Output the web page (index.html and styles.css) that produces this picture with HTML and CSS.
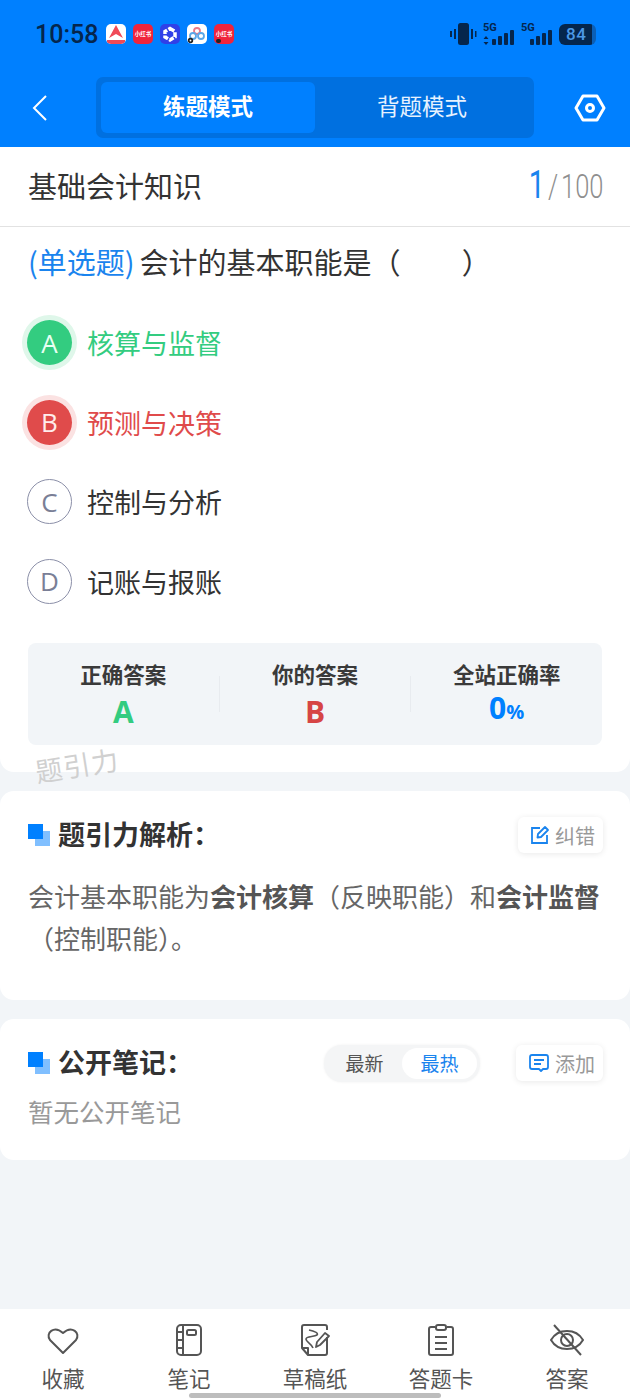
FILE: index.html
```html
<!DOCTYPE html>
<html lang="zh-CN">
<head>
    <meta charset="UTF-8">
    <meta name="viewport" content="width=device-width, initial-scale=1.0">
    <title>题引力</title>
    <link rel="stylesheet" href="styles.css">
</head>
<body>
    <header class="top">
        <div class="status">
            <span class="clock">10:58</span>
            <div class="apps">
                <span class="app app-white">
                    <svg viewBox="0 0 20 20" width="20" height="20"><path d="M10 1 17 14 10 10 3 14Z" fill="#f04a58"/><rect x="1" y="16" width="18" height="4" fill="#f04a58"/></svg>
                </span>
                <span class="app app-red">小红书</span>
                <span class="app app-indigo">
                    <svg viewBox="0 0 20 20" width="20" height="20" fill="none"><path d="M10 4.500 15 7.500V13L10 16 5 13V7.500Z" stroke="#fff" stroke-width="3.500" stroke-dasharray="5 1.500"/></svg>
                </span>
                <span class="app app-white">
                    <svg viewBox="0 0 20 20" width="20" height="20" fill="none" stroke-width="1.800"><circle cx="10" cy="7" r="3" stroke="#e8788a"/><circle cx="6" cy="12" r="3" stroke="#5aa7e8"/><circle cx="14" cy="12" r="3" stroke="#5aa7e8"/><circle cx="3.500" cy="16.500" r="1.800" stroke="#222"/></svg>
                </span>
                <span class="app app-red">小红书<i class="app-dot"></i></span>
            </div>
            <div class="sys">
                <svg viewBox="0 0 27 22" width="27" height="22" fill="#05264d"><rect x="0" y="8" width="2" height="6"/><rect x="4" y="6" width="2" height="10"/><rect x="8" y="0" width="11" height="22" rx="2.500"/><rect x="21" y="6" width="2" height="10"/><rect x="25" y="8" width="1.500" height="6"/></svg>
                <div class="signal">
                    <span class="net">5G</span>
                    <svg class="bars" viewBox="0 0 32 22" width="32" height="22" fill="#05264d"><path d="M3 13 5.500 16H.5ZM3 22 .5 19H5.500Z"/><rect x="9" y="16" width="4" height="6" rx="1"/><rect x="15" y="13" width="4" height="9" rx="1"/><rect x="21" y="10" width="4" height="12" rx="1"/><rect x="27" y="7" width="4" height="15" rx="1"/></svg>
                </div>
                <div class="signal">
                    <span class="net">5G</span>
                    <svg class="bars" viewBox="0 0 32 22" width="32" height="22" fill="#05264d"><rect x="9" y="16" width="4" height="6" rx="1"/><rect x="15" y="13" width="4" height="9" rx="1"/><rect x="21" y="10" width="4" height="12" rx="1"/><rect x="27" y="7" width="4" height="15" rx="1"/></svg>
                </div>
                <div class="battery"><span class="battery-num">84</span></div>
            </div>
        </div>
        <nav class="nav">
            <svg class="back" viewBox="0 0 18 28" width="18" height="28" fill="none" stroke="#fff" stroke-width="2"><path d="M15 2 3 14 15 26"/></svg>
            <div class="tabs">
                <span class="tab tab-on">练题模式</span>
                <span class="tab">背题模式</span>
            </div>
            <svg class="gear" viewBox="0 0 32 28" width="32" height="28" fill="none" stroke="#fff" stroke-width="3"><path d="M9 2H23L30 14 23 26H9L2 14Z" stroke-linejoin="round"/><circle cx="16" cy="14" r="3.500"/></svg>
        </nav>
    </header>

    <main class="page">
        <section class="card card-question">
            <div class="subject">
                <span class="subject-name">基础会计知识</span>
                <span class="count"><b>1</b><i>/</i>100</span>
            </div>
            <div class="question"><span class="q-type">(单选题)</span>会计的基本职能是（<span class="q-blank"></span>）</div>
            <ul class="options">
                <li class="option right"><span class="letter">A</span>核算与监督</li>
                <li class="option wrong"><span class="letter">B</span>预测与决策</li>
                <li class="option"><span class="letter">C</span>控制与分析</li>
                <li class="option"><span class="letter">D</span>记账与报账</li>
            </ul>
            <div class="stats">
                <div class="stat"><span class="stat-label">正确答案</span><span class="stat-value green">A</span></div>
                <span class="stat-sep"></span>
                <div class="stat"><span class="stat-label">你的答案</span><span class="stat-value red">B</span></div>
                <span class="stat-sep"></span>
                <div class="stat"><span class="stat-label">全站正确率</span><span class="stat-value blue">0<small>%</small></span></div>
            </div>
            <span class="watermark">题引力</span>
        </section>

        <section class="card card-analysis">
            <div class="card-head">
                <span class="mark"></span>
                <h2 class="card-title">题引力解析：</h2>
                <span class="pill">
                    <svg viewBox="0 0 20 20" width="20" height="20" fill="none" stroke="#1a84ee" stroke-width="1.800"><path d="M10 3H2V18H17V10"/><path d="M8 9 15 2 18 5 11 12 7.500 12.500Z" stroke-linejoin="round"/></svg>
                    纠错
                </span>
            </div>
            <p class="analysis">会计基本职能为<b>会计核算</b>（反映职能）和<b>会计监督</b>（控制职能）。</p>
        </section>

        <section class="card card-notes">
            <div class="card-head">
                <span class="mark"></span>
                <h2 class="card-title">公开笔记：</h2>
                <div class="sort"><span class="sort-item">最新</span><span class="sort-item sort-on">最热</span></div>
                <span class="pill pill-add">
                    <svg viewBox="0 0 22 20" width="22" height="20" fill="none" stroke="#1a84ee" stroke-width="1.800"><path d="M4 2H18Q20 2 20 4V14Q20 16 18 16H15L13 18 11 16H4Q2 16 2 14V4Q2 2 4 2Z" stroke-linejoin="round"/><path d="M6 7H16M6 11H13"/></svg>
                    添加
                </span>
            </div>
            <p class="no-notes">暂无公开笔记</p>
        </section>
    </main>

    <footer class="bottom">
        <div class="tool">
            <svg viewBox="0 0 34 32" width="34" height="32" fill="none" stroke="#555" stroke-width="2"><path d="M17 29 4 16C-1 9 8 1 17 9 26 1 35 9 30 16Z" stroke-linejoin="round"/></svg>
            <span>收藏</span>
        </div>
        <div class="tool">
            <svg viewBox="0 0 28 32" width="28" height="32" fill="none" stroke="#555" stroke-width="2"><rect x="2" y="1" width="24" height="30" rx="4"/><path d="M8 1V31M2 8H8M2 16H8M2 24H8"/><rect x="12" y="6" width="9" height="5" rx="1.500"/></svg>
            <span>笔记</span>
        </div>
        <div class="tool">
            <svg viewBox="0 0 30 32" width="30" height="32" fill="none" stroke="#555" stroke-width="2"><path d="M27 13V29Q27 31 25 31H8L2 24V3Q2 1 4 1H25Q27 1 27 3V6" stroke-linejoin="round"/><path d="M2 24H8V31" stroke-linejoin="round"/><path d="M9 6C14 7 19 9 17 11 14 13 6 12 6 15 6 18 12 20 13 24" stroke-width="1.600"/><path d="M16 23 17 18 25 9 29 12 20 21Z" stroke-width="1.800" stroke-linejoin="round"/></svg>
            <span>草稿纸</span>
        </div>
        <div class="tool">
            <svg viewBox="0 0 28 32" width="28" height="32" fill="none" stroke="#555" stroke-width="2"><path d="M8 3H4Q2 3 2 5V29Q2 31 4 31H24Q26 31 26 29V5Q26 3 24 3H20"/><rect x="9" y="1" width="10" height="5" rx="2"/><path d="M8 13H20M8 19H20M8 25H20"/></svg>
            <span>答题卡</span>
        </div>
        <div class="tool">
            <svg viewBox="0 0 36 32" width="36" height="32" fill="none" stroke="#555" stroke-width="2"><path d="M2 16C9 4 27 4 34 16 27 28 9 28 2 16Z"/><circle cx="18" cy="16" r="6"/><path d="M5 1 32 31"/></svg>
            <span>答案</span>
        </div>
        <span class="home-bar"></span>
    </footer>
</body>
</html>
```

FILE: styles.css
```css
* {
    box-sizing: border-box;
}
body {
    margin: 0;
    width: 630px;
    height: 1400px;
    position: relative;
    overflow: hidden;
    background-color: #f2f5f8;
    color: #333;
    font-family: "Noto Sans CJK SC", "Noto Sans", sans-serif;
    display: flex;
    flex-direction: column;
}

/* blue header */
.top {
    height: 147px;
    background-color: #0080ff;
    padding: 20px 34px 0 35px;
}
.status {
    display: flex;
    align-items: center;
    height: 28px;
}
.clock {
    font-family: Roboto, sans-serif;
    font-size: 25px;
    font-weight: 500;
    color: #05264d;
    width: 71px;
}
.apps {
    display: flex;
    gap: 7px;
}
.app {
    width: 20px;
    height: 20px;
    border-radius: 5px;
    overflow: hidden;
    display: flex;
    align-items: center;
    justify-content: center;
    position: relative;
    font-size: 5.500px;
    font-weight: 700;
    white-space: nowrap;
    color: #fff;
}
.app-white { background-color: #fff; }
.app-red { background-color: #f0243c; }
.app-indigo { background-color: #3040e8; }
.app-dot {
    position: absolute;
    left: 2px;
    bottom: 1px;
    width: 5px;
    height: 4px;
    border-radius: 2px;
    background-color: #222;
}
.sys {
    margin-left: auto;
    display: flex;
    align-items: center;
    gap: 6px;
}
.signal {
    position: relative;
    width: 32px;
    height: 22px;
}
.net {
    position: absolute;
    left: 0;
    top: -1px;
    font-family: Roboto, sans-serif;
    font-size: 11px;
    font-weight: 700;
    line-height: 11px;
    color: #05264d;
}
.bars {
    display: block;
}
.battery {
    width: 37px;
    height: 21px;
    background: linear-gradient(90deg, #05264d 89%, #0a5fb8 89%);
    border-radius: 6px;
    padding-left: 7px;
}
.battery-num {
    display: block;
    font-family: Roboto, sans-serif;
    font-size: 17px;
    font-weight: 500;
    line-height: 20px;
    color: #4c98e6;
    letter-spacing: 0.500px;
}
.nav {
    margin: 29px -34px 0 -35px;
    padding: 0 24px 0 31px;
    display: flex;
    align-items: center;
    height: 61px;
}
.back {
    flex: none;
}
.tabs {
    width: 438px;
    height: 61px;
    margin-left: 47px;
    padding: 5px;
    background-color: #0070e0;
    border-radius: 7px;
    display: flex;
}
.tab {
    flex: 1;
    display: flex;
    align-items: center;
    justify-content: center;
    font-size: 22.500px;
    color: #e6f2ff;
    border-radius: 6px;
    padding-bottom: 5px;
}
.tab-on {
    background-color: #0080ff;
    color: #fff;
    font-weight: 700;
}
.gear {
    flex: none;
    margin-left: auto;
}

/* cards */
.page {
    flex: 1;
    display: flex;
    flex-direction: column;
    gap: 19px;
}
.card {
    background-color: #fff;
    border-radius: 14px;
    position: relative;
}
.card-question {
    height: 625px;
    border-radius: 0 0 14px 14px;
}
.subject {
    height: 80px;
    padding: 0 27px 3px 28px;
    display: flex;
    align-items: center;
    justify-content: space-between;
    border-bottom: 1px solid #e2e2e2;
}
.subject-name {
    font-size: 29px;
    color: #333;
}
/* the digits in the screenshot are narrower than any installed face */
.count {
    font-family: Roboto, sans-serif;
    font-size: 34px;
    font-weight: 300;
    line-height: 40px;
    color: #8f8f8f;
    transform: scaleX(0.75);
    transform-origin: right center;
}
.count b {
    font-size: 38px;
    font-weight: 400;
    color: #1a84ee;
}
.count i {
    font-style: normal;
    margin: 0 4px;
}
.question {
    padding: 13px 28px 0;
    font-size: 29px;
    line-height: 42px;
    color: #333;
}
.q-type {
    color: #1a84ee;
    margin-right: 5px;
}
.q-blank {
    display: inline-block;
    width: 61px;
}
.options {
    list-style: none;
    margin: 21px 0 0;
    padding: 0 27px;
}
.option {
    height: 79.500px;
    display: flex;
    align-items: center;
    gap: 15px;
    font-size: 27px;
    color: #333;
}
.letter {
    width: 45px;
    height: 45px;
    flex: none;
    border-radius: 50%;
    border: 1.500px solid #8b8fa8;
    display: flex;
    align-items: center;
    justify-content: center;
    font-family: "Open Sans", sans-serif;
    font-size: 26px;
    font-weight: 400;
    color: #7a7f96;
}
.right { color: #33cc80; }
.right .letter {
    background-color: #33cc80;
    border: none;
    color: #e8fff3;
    box-shadow: 0 0 0 5px #dff7ea;
}
.wrong { color: #e04b4b; }
.wrong .letter {
    background-color: #e04b4b;
    border: none;
    color: #ffecec;
    box-shadow: 0 0 0 5px #fbe2e2;
}
.stats {
    margin: 22px 28px 0;
    height: 102px;
    background-color: #f2f5f8;
    border-radius: 8px;
    display: flex;
    align-items: center;
}
.stat {
    flex: 1;
    height: 71px;
    display: flex;
    flex-direction: column;
    align-items: center;
    justify-content: space-between;
}
.stat-sep {
    width: 1px;
    height: 36px;
    flex: none;
    background-color: #e8ebef;
}
.stat-label {
    font-size: 21.500px;
    font-weight: 700;
    line-height: 30px;
    color: #3a3a3a;
    white-space: nowrap;
}
.stat-value {
    font-family: "Open Sans", sans-serif;
    font-size: 30px;
    font-weight: 700;
    line-height: 36px;
}
.stat-value small {
    font-size: 20px;
}
.green { color: #33cc80; }
.red { color: #d64545; }
.blue { color: #0080ff; }
.watermark {
    position: absolute;
    left: 35px;
    top: 598px;
    font-size: 27px;
    letter-spacing: 1px;
    color: #d0d0d0;
    transform: rotate(-9deg);
}
.card-analysis {
    height: 209px;
    padding: 26px 28px 0;
}
.card-notes {
    height: 141px;
    padding: 26px 28px 0;
}
.card-head {
    display: flex;
    align-items: center;
    height: 36px;
}
.mark {
    width: 22px;
    height: 22px;
    flex: none;
    background:
        linear-gradient(#0080ff, #0080ff) 0 0 / 15px 15px no-repeat,
        linear-gradient(#80bfff, #80bfff) 7px 7px / 15px 15px no-repeat;
    margin-right: 8px;
}
.card-title {
    margin: 0 0 3px;
    font-size: 27px;
    font-weight: 700;
    color: #333;
}
.pill {
    margin-left: auto;
    margin-right: -1px;
    height: 36px;
    padding: 0 8px 0 12px;
    display: flex;
    align-items: center;
    gap: 5px;
    background-color: #fff;
    border-radius: 6px;
    box-shadow: 0 1px 6px rgba(0, 0, 0, 0.09);
    font-size: 20px;
    color: #999;
}
.analysis {
    margin: 22px 0 0;
    font-size: 26px;
    line-height: 42px;
    color: #666;
}
.analysis b {
    font-weight: 700;
    color: #555;
}
.sort {
    margin-left: auto;
    width: 156px;
    height: 37px;
    padding: 3px;
    display: flex;
    background-color: #f4f5f6;
    border-radius: 18px;
    box-shadow: 0 0 3px rgba(0, 0, 0, 0.06);
}
.sort-item {
    flex: 1;
    display: flex;
    align-items: center;
    justify-content: center;
    font-size: 19px;
    color: #555;
    border-radius: 16px;
    padding-bottom: 2px;
}
.sort-on {
    background-color: #fff;
    color: #1a84ee;
}
.pill-add {
    margin-left: 36px;
    padding: 0 8px 0 12px;
}
.no-notes {
    margin: 12px 0 0;
    font-size: 25.500px;
    line-height: 36px;
    color: #999;
}

/* bottom toolbar */
.bottom {
    height: 91px;
    flex: none;
    background-color: #fff;
    padding-top: 15px;
    display: flex;
    position: relative;
}
.tool {
    flex: 1;
    display: flex;
    flex-direction: column;
    align-items: center;
    height: 69px;
    justify-content: space-between;
    font-size: 21.500px;
    line-height: 30px;
    color: #555;
}
.tool svg {
    height: 32px;
}
.home-bar {
    position: absolute;
    left: 189px;
    bottom: 2px;
    width: 252px;
    height: 5px;
    border-radius: 3px;
    background-color: #bdbdbd;
}
```
